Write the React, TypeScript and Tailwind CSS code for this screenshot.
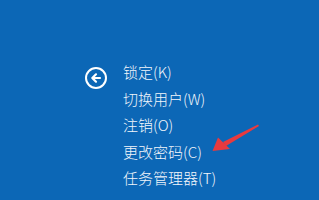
import React from 'react';

const items = ['锁定(K)', '切换用户(W)', '注销(O)', '更改密码(C)', '任务管理器(T)'];

export default function App() {
    return (
        <div className="relative w-[319px] h-[200px] overflow-hidden bg-[#0c67b6]">
            <div className="flex pl-[85px] pt-[59px]">
                {/* back button */}
                <div className="mt-[8px] w-[22px] h-[22px] rounded-full border-2 border-white flex items-center justify-center shrink-0">
                    <svg width="12" height="12" viewBox="0 0 12 12" fill="none" stroke="white" strokeWidth="2.2" strokeLinecap="round" strokeLinejoin="round">
                        <path d="M10 6H2.5M6 2.3 2.3 6 6 9.7" />
                    </svg>
                </div>
                <div className="ml-[16px] flex flex-col text-[#f2f6fb] text-[15px] leading-[26.5px] font-light font-['Noto_Sans_CJK_SC','Noto_Sans',sans-serif]">
                    {items.map((item) => (
                        <span key={item}>{item}</span>
                    ))}
                </div>
            </div>
            {/* red annotation arrow */}
            <svg className="absolute left-0 top-0" width="319" height="200" viewBox="0 0 319 200">
                <path d="M258 124.5 L259 126 L226 146 L223 142 Z" fill="#e83a3e" />
                <path d="M212.5 151 L218 137.5 L230 149 Z" fill="#e83a3e" />
            </svg>
        </div>
    );
}
